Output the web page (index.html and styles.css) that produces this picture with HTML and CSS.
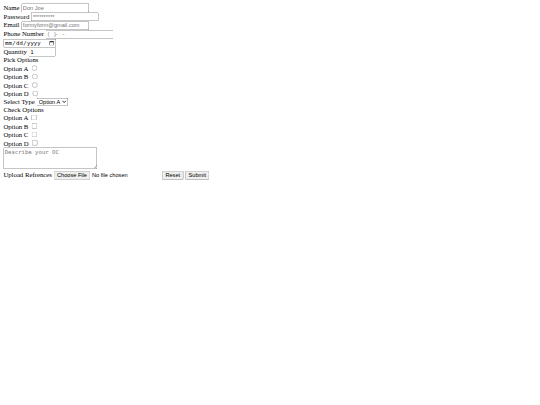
FILE: index.html
```html
<!DOCTYPE html>
<html lang="en">
<head>
<meta charset="utf-8">
<title>Form</title>
<link rel="stylesheet" href="styles.css">
</head>
<body>
<form class="page">
<label for="n">Name</label> <input id="n" class="field" type="text" placeholder="Don Joe"><br>
<label for="p">Password</label> <input id="p" class="field" type="text" placeholder="**********"><br>
<label for="e">Email</label> <input id="e" class="field" type="email" placeholder="formyform@gmail.com"><br>
<label for="t">Phone Number</label> <input id="t" class="field" type="tel" placeholder="(   )-   -"><br>
<input type="date" aria-label="Date"><br>
<label for="q">Quantity</label> <input id="q" class="qty" type="number" value="1"><br>
Pick Options<br>
Option A <input type="radio" name="o"><br>
Option B <input type="radio" name="o"><br>
Option C <input type="radio" name="o"><br>
Option D <input type="radio" name="o"><br>
<label for="s">Select Type</label> <select id="s"><option>Option A</option><option>Option B</option></select><br>
Check Options<br>
Option A <input type="checkbox"><br>
Option B <input type="checkbox"><br>
Option C <input type="checkbox"><br>
Option D <input type="checkbox"><br>
<textarea class="oc" placeholder="Describe your OC"></textarea><br>
<label for="f">Upload Refrences</label> <input id="f" type="file">
<input type="reset" value="Reset"> <input type="submit" value="Submit">
</form>
</body>
</html>
```
FILE: styles.css
```css
html, body {
  margin: 0;
  height: 405px;
}
.page {
  box-sizing: border-box;
  height: 405px;
  padding: 8px;
  transform: scale(0.421875);
  transform-origin: 0 0;
}
.field {
  width: 153px;
}
.qty {
  width: 56px;
}
.oc {
  width: 216px;
  height: 46px;
}
```
